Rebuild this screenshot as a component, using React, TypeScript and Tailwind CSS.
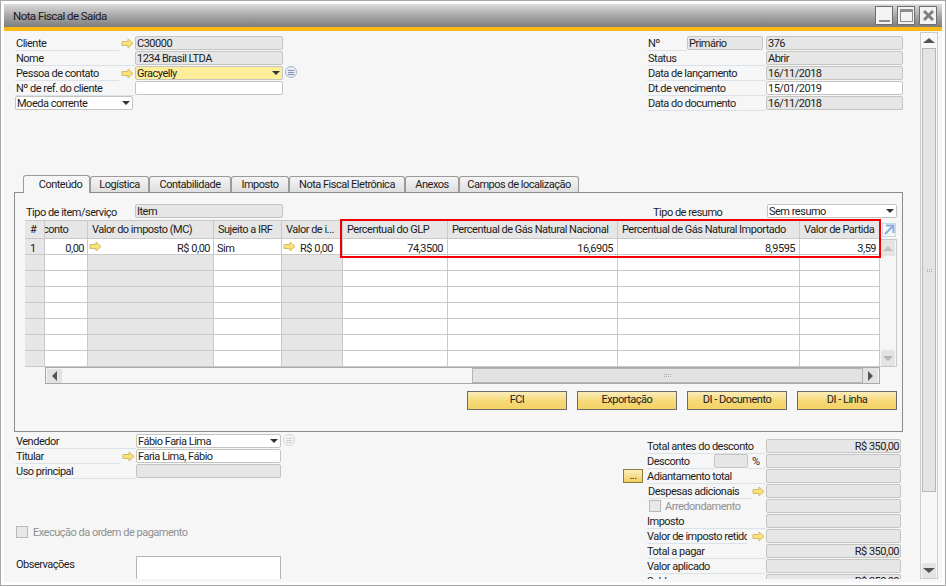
import React from "react";

const font = "font-['Roboto','Liberation_Sans',sans-serif]";

function Arrow() {
    return (
        <svg width="13" height="11" viewBox="0 0 13 11" className="block shrink-0">
            <path d="M1 3.5H7V1L12 5.5L7 10V7.5H1Z" fill="#f8e27a" stroke="#d2bc66" strokeWidth="1" />
        </svg>
    );
}

function Caret() {
    return <span className="block h-0 w-0 shrink-0 border-x-[4px] border-t-[4px] border-x-transparent border-t-[#333]" />;
}

function ArrowSlot({ width }: { width: number }) {
    return (
        <span style={{ width }} className="flex shrink-0 justify-end pr-px pt-[2px]">
            <Arrow />
        </span>
    );
}

function Field({ value, kind = "off", width, align, select }: { value?: string; kind?: "off" | "on" | "yellow"; width: number; align?: "right"; select?: boolean }) {
    const bg = kind === "off" ? "bg-[#e6e6e6]" : kind === "yellow" ? "bg-[#fdee9a]" : "bg-white";
    return (
        <div
            style={{ width }}
            className={`flex h-[14px] shrink-0 items-center rounded-[2px] border border-[#c4c4c0] pl-[1px] pr-[1px] leading-[12px] text-[#1c1c1c] ${bg} ${align === "right" ? "justify-end" : "justify-between"}`}
        >
            <span className="mt-[2px] whitespace-nowrap">{value}</span>
            {select && <span className="mr-[1px] block"><Caret /></span>}
        </div>
    );
}

function Label({ text, width, pl = 1 }: { text: string; width: number; pl?: number }) {
    return (
        <div style={{ width, paddingLeft: pl }} className="h-[15px] shrink-0 overflow-hidden whitespace-nowrap border-b border-[#d8e2e8] leading-[15px] text-[#1c1c1c]">
            {text}
        </div>
    );
}

function ListDot({ faded }: { faded?: boolean }) {
    return (
        <span className={`ml-[2px] flex h-[12px] w-[12px] shrink-0 flex-col items-center justify-center gap-[1px] rounded-full border ${faded ? "border-[#d4d4d4]" : "border-[#a9b3c9] bg-[#e8ebf3]"}`}>
            <span className={`h-px w-[6px] ${faded ? "bg-[#cfcfcf]" : "bg-[#8490ad]"}`} />
            <span className={`h-px w-[6px] ${faded ? "bg-[#cfcfcf]" : "bg-[#8490ad]"}`} />
            <span className={`h-px w-[6px] ${faded ? "bg-[#cfcfcf]" : "bg-[#8490ad]"}`} />
        </span>
    );
}

function WinButton({ children }: { children: React.ReactNode }) {
    return (
        <div className="flex h-[19px] w-[18px] items-center justify-center border border-[#6e6e6e] bg-[#f3f3f3]">
            {children}
        </div>
    );
}

const tabs = [
    { name: "Logística", w: 59 },
    { name: "Contabilidade", w: 82 },
    { name: "Imposto", w: 58 },
    { name: "Nota Fiscal Eletrônica", w: 116 },
    { name: "Anexos", w: 54 },
    { name: "Campos de localização", w: 120 },
];

const cols = [
    { title: "#", w: 20, cls: "pl-[5px]" },
    { title: "conto", w: 43, cls: "pl-0 indent-[-2px]" },
    { title: "Valor do imposto (MC)", w: 126, cls: "pl-[4px]" },
    { title: "Sujeito a IRF", w: 68, cls: "pl-[4px]" },
    { title: "Valor de i...", w: 61, cls: "pl-[4px]" },
    { title: "Percentual do GLP", w: 105, cls: "pl-[4px]" },
    { title: "Percentual de Gás Natural Nacional", w: 170, cls: "pl-[4px]" },
    { title: "Percentual de Gás Natural Importado", w: 182, cls: "pl-[4px]" },
    { title: "Valor de Partida", w: 80, cls: "pl-[4px]" },
];

const widths = cols.map((c) => c.w);

function DataRow() {
    return (
        <div className="flex h-[16px] whitespace-nowrap border-b border-[#c9c9c9] leading-[19px]">
            <div style={{ width: widths[0] }} className="border-r border-[#c9c9c9] bg-[#e6e6e6] pl-[5px]">1</div>
            <div style={{ width: widths[1] }} className="border-r border-[#c9c9c9] bg-white pr-[3px] text-right">0,00</div>
            <div style={{ width: widths[2] }} className="flex items-start justify-between border-r border-[#c9c9c9] bg-white pl-[1px] pr-[3px]"><span className="pt-[2px]"><Arrow /></span><span>R$ 0,00</span></div>
            <div style={{ width: widths[3] }} className="border-r border-[#c9c9c9] bg-white pl-[3px]">Sim</div>
            <div style={{ width: widths[4] }} className="flex items-start justify-between border-r border-[#c9c9c9] bg-white pl-[1px] pr-[9px]"><span className="pt-[2px]"><Arrow /></span><span>R$ 0,00</span></div>
            <div style={{ width: widths[5] }} className="border-r border-[#c9c9c9] bg-white pr-[4px] text-right">74,3500</div>
            <div style={{ width: widths[6] }} className="border-r border-[#c9c9c9] bg-white pr-[4px] text-right">16,6905</div>
            <div style={{ width: widths[7] }} className="border-r border-[#c9c9c9] bg-white pr-[4px] text-right">8,9595</div>
            <div style={{ width: widths[8] }} className="bg-white pr-[4px] text-right">3,59</div>
        </div>
    );
}

function EmptyRow() {
    return (
        <div className="flex h-[16px] border-b border-[#c9c9c9]">
            {widths.map((w, i) => {
                const gray = i === 0 || i === 2 || i === 4;
                return <div key={i} style={{ width: w }} className={`border-r border-[#c9c9c9] ${gray ? "bg-[#e6e6e6]" : "bg-white"}`} />;
            })}
        </div>
    );
}

function ActionButton({ text }: { text: string }) {
    return (
        <button className="flex h-[19px] w-[100px] items-center justify-center border border-[#6b6b6b] bg-gradient-to-b from-[#fbeebb] via-[#f6d978] to-[#f4d266] pb-px leading-[14px] text-[#222]">
            {text}
        </button>
    );
}

function Bar({ dir }: { dir: "up" | "down" }) {
    return (
        <div className="flex h-[16px] w-[14px] shrink-0 items-center justify-center bg-[#e4e4e4]">
            <span className={`h-0 w-0 border-x-[5px] border-x-transparent ${dir === "up" ? "border-b-[5px] border-b-[#c2c2c2]" : "border-t-[5px] border-t-[#b4b4b4]"}`} />
        </div>
    );
}

function Grip() {
    return (
        <div className="grid grid-cols-3 gap-[1px]">
            {[0, 1, 2, 3, 4, 5].map((i) => (
                <span key={i} className="h-px w-px bg-[#aaa]" />
            ))}
        </div>
    );
}

function TotalRow({ label, value }: { label: string; value?: string }) {
    return (
        <div className="flex h-[15px] items-start">
            <span className="w-[24px] shrink-0" />
            <Label text={label} width={119} pl={0} />
            <Field value={value} width={135} align="right" />
        </div>
    );
}

export default function App() {
    return (
        <div className={`${font} relative h-[587px] w-[946px] overflow-hidden bg-white text-[11px] tracking-[-0.5px] text-[#1c1c1c]`}>
            <div className="flex h-[586px] w-[946px] flex-col border border-[#a8a8a8] bg-[#fdfdfd] pb-[2px] pl-[3px] pr-[3px] pt-[3px]">
                {/* Title bar */}
                <div className="flex h-[23px] shrink-0 items-center justify-between bg-gradient-to-b from-[#dcdcdc] via-[#a9a9a9] to-[#7d7d7d] pl-[9px] pr-[5px]">
                    <span className="text-[11.5px] leading-[16px] tracking-[-0.55px] text-[#1e1422]">Nota Fiscal de Saída</span>
                    <div className="flex gap-[4px]">
                        <WinButton><span className="mt-[11px] h-[2px] w-[11px] bg-[#8c8c8c]" /></WinButton>
                        <WinButton><span className="h-[13px] w-[13px] border border-t-[3px] border-[#8c8c8c]" /></WinButton>
                        <WinButton>
                            <svg width="13" height="13" viewBox="0 0 13 13"><path d="M2 2L11 11M11 2L2 11" stroke="#808080" strokeWidth="3" /></svg>
                        </WinButton>
                    </div>
                </div>
                <div className="h-[4px] shrink-0 bg-[#fdb913]" />

                {/* Body */}
                <div className="flex h-[551px] bg-[#f6f6f6] pb-[3px]">
                    <div className="w-[916px] shrink-0 overflow-hidden">
                        {/* Header fields */}
                        <div className="flex h-[144px] justify-between pl-[11px] pr-[17px] pt-[5px]">
                            <div className="flex w-[290px] flex-col">
                                <div className="flex h-[15px] items-start">
                                    <Label text="Cliente" width={104} />
                                    <ArrowSlot width={16} />
                                    <Field value="C30000" width={148} />
                                </div>
                                <div className="flex h-[15px] items-start">
                                    <Label text="Nome" width={120} />
                                    <Field value="1234 Brasil LTDA" width={148} />
                                </div>
                                <div className="flex h-[15px] items-start">
                                    <Label text="Pessoa de contato" width={104} />
                                    <ArrowSlot width={16} />
                                    <Field value="Gracyelly" kind="yellow" width={148} select />
                                    <ListDot />
                                </div>
                                <div className="flex h-[15px] items-start">
                                    <Label text="Nº de ref. do cliente" width={120} />
                                    <Field value="" kind="on" width={148} />
                                </div>
                                <div className="flex h-[15px] items-start">
                                    <Field value="Moeda corrente" kind="on" width={118} select />
                                </div>
                            </div>
                            <div className="flex w-[256px] flex-col">
                                <div className="flex h-[15px] items-start">
                                    <Label text="Nº" width={40} />
                                    <Field value="Primário" width={76} />
                                    <span className="w-[3px] shrink-0" />
                                    <Field value="376" width={137} />
                                </div>
                                <div className="flex h-[15px] items-start">
                                    <Label text="Status" width={119} />
                                    <Field value="Abrir" width={137} />
                                </div>
                                <div className="flex h-[15px] items-start">
                                    <Label text="Data de lançamento" width={119} />
                                    <Field value="16/11/2018" width={137} />
                                </div>
                                <div className="flex h-[15px] items-start">
                                    <Label text="Dt.de vencimento" width={119} />
                                    <Field value="15/01/2019" kind="on" width={137} />
                                </div>
                                <div className="flex h-[15px] items-start">
                                    <Label text="Data do documento" width={119} />
                                    <Field value="16/11/2018" width={137} />
                                </div>
                            </div>
                        </div>

                        {/* Tabs */}
                        <div className="ml-[19px] flex h-[17px] items-end">
                            <div className="relative z-10 -mb-px flex h-[18px] w-[67px] items-center justify-center rounded-t-[3px] border border-b-0 border-[#9a9a9a] bg-[#f6f6f6] pl-[8px] leading-[14px]">Conteúdo</div>
                            {tabs.map((t) => (
                                <div key={t.name} style={{ width: t.w }} className="flex h-[16px] items-center justify-center whitespace-nowrap rounded-t-[3px] border border-b-0 border-[#9a9a9a] bg-gradient-to-b from-[#f5f5f5] to-[#dedede] leading-[14px]">
                                    {t.name}
                                </div>
                            ))}
                        </div>

                        {/* Panel */}
                        <div className="relative ml-[10px] h-[240px] w-[889px] border border-[#8c8c8c] bg-[#f6f6f6] pl-[10px] pt-[11px]">
                            <div className="flex h-[16px] items-start justify-between pr-[5px]">
                                <div className="flex">
                                    <div className="mr-[17px] h-[16px] w-[93px] overflow-hidden whitespace-nowrap pl-[1px] leading-[18px]">Tipo de item/serviço</div>
                                    <Field value="Item" width={148} />
                                </div>
                                <div className="flex">
                                    <div className="w-[114px] whitespace-nowrap leading-[18px]">Tipo de resumo</div>
                                    <Field value="Sem resumo" kind="on" width={130} select />
                                </div>
                            </div>

                            {/* Grid */}
                            <div className="flex w-[872px]">
                                <div className="w-[855px] shrink-0">
                                    <div className="flex h-[19px] border-b border-t border-[#c9c9c9]">
                                        {cols.map((c) => (
                                            <div key={c.title} style={{ width: c.w }} className={`overflow-hidden whitespace-nowrap border-r border-[#c9c9c9] bg-[#e6e6e6] leading-[18px] ${c.cls}`}>
                                                {c.title}
                                            </div>
                                        ))}
                                    </div>
                                    <DataRow />
                                    <EmptyRow />
                                    <EmptyRow />
                                    <EmptyRow />
                                    <EmptyRow />
                                    <EmptyRow />
                                    <EmptyRow />
                                    <EmptyRow />
                                </div>
                                <div className="w-[17px] shrink-0">
                                    <div className="flex h-[19px] items-center justify-center">
                                        <svg width="14" height="14" viewBox="0 0 14 14">
                                            <rect x="0.5" y="0.5" width="13" height="13" fill="none" stroke="#c6d9ee" />
                                            <path d="M4 2.5H11.5V10M11 3L3 11" fill="none" stroke="#85aedb" strokeWidth="2" />
                                        </svg>
                                    </div>
                                    <div className="flex h-[128px] flex-col justify-between border border-l-0 border-[#c9c9c9] bg-[#f6f6f6] pl-[1px]">
                                        <Bar dir="up" />
                                        <Bar dir="down" />
                                    </div>
                                </div>
                            </div>

                            {/* Horizontal scrollbar */}
                            <div className="ml-[20px] flex h-[17px] w-[835px] items-center justify-between border border-[#a8a8a8] px-px">
                                <div className="flex h-[14px] w-[15px] items-center justify-center bg-[#e2e2e2]">
                                    <span className="h-0 w-0 border-y-[5px] border-r-[5px] border-y-transparent border-r-[#555]" />
                                </div>
                                <div className="flex">
                                    <div className="flex h-[15px] w-[391px] items-center justify-center border border-[#b4b4b4] bg-[#e2e2e2]"><div className="grid grid-cols-4 gap-[1px]">{[0, 1, 2, 3, 4, 5, 6, 7].map((i) => <span key={i} className="h-px w-px bg-[#aaa]" />)}</div></div>
                                    <div className="flex h-[15px] w-[15px] items-center justify-center bg-[#e2e2e2]">
                                        <span className="h-0 w-0 border-y-[5px] border-l-[5px] border-y-transparent border-l-[#555]" />
                                    </div>
                                </div>
                            </div>

                            {/* Buttons */}
                            <div className="mt-[7px] flex justify-end gap-[10px] pr-[5px]">
                                <ActionButton text="FCI" />
                                <ActionButton text="Exportação" />
                                <ActionButton text="DI - Documento" />
                                <ActionButton text="DI - Linha" />
                            </div>

                            {/* Red highlight over the grid columns */}
                            <div className="absolute left-[325px] top-[26px] h-[39px] w-[541px] border-2 border-[#f00000]" />
                        </div>

                        {/* Footer fields */}
                        <div className="flex justify-between pl-[11px] pr-[19px] pt-[2px]">
                            <div className="flex h-[145px] w-[290px] flex-col">
                                <div className="flex h-[17px] items-start">
                                    <Label text="Vendedor" width={121} pl={1} />
                                    <Field value="Fábio Faria Lima" kind="on" width={145} select />
                                    <ListDot faded />
                                </div>
                                <div className="flex h-[16px] items-start">
                                    <Label text="Titular" width={105} pl={1} />
                                    <ArrowSlot width={16} />
                                    <Field value="Faria Lima, Fábio" kind="on" width={145} />
                                </div>
                                <div className="flex h-[16px] items-start">
                                    <Label text="Uso principal" width={121} pl={1} />
                                    <Field value="" width={145} />
                                </div>
                                <div className="mt-[46px] flex h-[14px] items-center gap-[5px] pl-[1px] text-[#8f8f8f]">
                                    <span className="h-[12px] w-[12px] shrink-0 border border-[#b8b8b8] bg-[#e8e8e8]" />
                                    <span className="mt-[2px] whitespace-nowrap">Execução da ordem de pagamento</span>
                                </div>
                                <div className="mt-[17px] flex items-start">
                                    <div className="w-[121px] pl-[1px] leading-[17px]">Observações</div>
                                    <div className="h-[40px] w-[145px] shrink-0 border border-[#b4b4b4] bg-white" />
                                </div>
                            </div>
                            <div className="mt-[5px] flex h-[145px] w-[278px] flex-col">
                                <TotalRow label="Total antes do desconto" value="R$ 350,00" />
                                <div className="flex h-[15px] items-start">
                                    <span className="w-[24px] shrink-0" />
                                    <Label text="Desconto" width={67} pl={0} />
                                    <Field width={34} />
                                    <div className="h-[15px] w-[18px] shrink-0 border-b border-[#d8e2e8] pl-[4px] leading-[15px]">%</div>
                                    <Field width={135} />
                                </div>
                                <div className="flex h-[15px] items-start">
                                    <button className="mr-[4px] flex h-[14px] w-[20px] shrink-0 items-center justify-center border border-[#8a7a3c] bg-gradient-to-b from-[#fbeebb] to-[#f2cc5c] leading-[10px]">...</button>
                                    <Label text="Adiantamento total" width={119} pl={0} />
                                    <Field width={135} />
                                </div>
                                <div className="flex h-[15px] items-start">
                                    <span className="w-[24px] shrink-0" />
                                    <Label text="Despesas adicionais" width={105} pl={1} />
                                    <ArrowSlot width={14} />
                                    <Field width={135} />
                                </div>
                                <div className="flex h-[15px] items-start">
                                    <span className="w-[26px] shrink-0" />
                                    <span className="mt-px h-[12px] w-[12px] shrink-0 border border-[#b8b8b8] bg-[#e8e8e8]" />
                                    <span className="w-[105px] shrink-0 pl-[4px] leading-[15px] text-[#8f8f8f]">Arredondamento</span>
                                    <Field width={135} />
                                </div>
                                <TotalRow label="Imposto" />
                                <div className="flex h-[15px] items-start">
                                    <span className="w-[24px] shrink-0" />
                                    <Label text="Valor de imposto retido" width={100} pl={0} />
                                    <ArrowSlot width={19} />
                                    <Field width={135} />
                                </div>
                                <TotalRow label="Total a pagar" value="R$ 350,00" />
                                <TotalRow label="Valor aplicado" />
                                <TotalRow label="Saldo" value="R$ 350,00" />
                            </div>
                        </div>
                    </div>

                    {/* Window scrollbar */}
                    <div className="mt-px flex h-[547px] w-[18px] shrink-0 flex-col border border-[#c8cfc6] px-px">
                        <div className="flex h-[15px] shrink-0 items-center justify-center">
                            <span className="h-0 w-0 border-x-[6px] border-b-[5px] border-x-transparent border-b-[#555]" />
                        </div>
                        <div className="flex h-[444px] shrink-0 items-center justify-center border border-[#b4b8b0] bg-[#e4e4e4]"><Grip /></div>
                        <div className="flex-1" />
                        <div className="flex h-[15px] shrink-0 items-center justify-center bg-[#e4e4e4]">
                            <span className="h-0 w-0 border-x-[6px] border-t-[5px] border-x-transparent border-t-[#555]" />
                        </div>
                    </div>
                </div>
            </div>
        </div>
    );
}
